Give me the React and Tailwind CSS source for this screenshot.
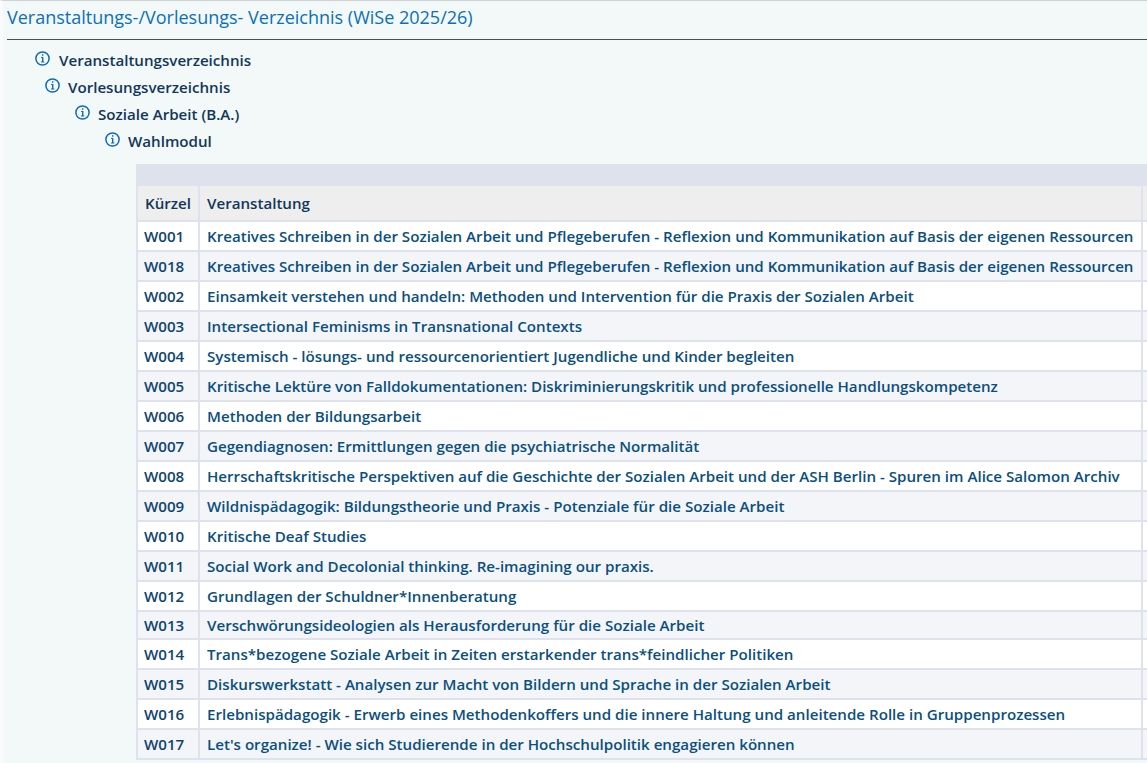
import React from 'react';

const rows = [
    ['W001', 'Kreatives Schreiben in der Sozialen Arbeit und Pflegeberufen - Reflexion und Kommunikation auf Basis der eigenen Ressourcen'],
    ['W018', 'Kreatives Schreiben in der Sozialen Arbeit und Pflegeberufen - Reflexion und Kommunikation auf Basis der eigenen Ressourcen'],
    ['W002', 'Einsamkeit verstehen und handeln: Methoden und Intervention für die Praxis der Sozialen Arbeit'],
    ['W003', 'Intersectional Feminisms in Transnational Contexts'],
    ['W004', 'Systemisch - lösungs- und ressourcenorientiert Jugendliche und Kinder begleiten'],
    ['W005', 'Kritische Lektüre von Falldokumentationen: Diskriminierungskritik und professionelle Handlungskompetenz'],
    ['W006', 'Methoden der Bildungsarbeit'],
    ['W007', 'Gegendiagnosen: Ermittlungen gegen die psychiatrische Normalität'],
    ['W008', 'Herrschaftskritische Perspektiven auf die Geschichte der Sozialen Arbeit und der ASH Berlin - Spuren im Alice Salomon Archiv'],
    ['W009', 'Wildnispädagogik: Bildungstheorie und Praxis - Potenziale für die Soziale Arbeit'],
    ['W010', 'Kritische Deaf Studies'],
    ['W011', 'Social Work and Decolonial thinking. Re-imagining our praxis.'],
    ['W012', 'Grundlagen der Schuldner*Innenberatung'],
    ['W013', 'Verschwörungsideologien als Herausforderung für die Soziale Arbeit'],
    ['W014', 'Trans*bezogene Soziale Arbeit in Zeiten erstarkender trans*feindlicher Politiken'],
    ['W015', 'Diskurswerkstatt - Analysen zur Macht von Bildern und Sprache in der Sozialen Arbeit'],
    ['W016', 'Erlebnispädagogik - Erwerb eines Methodenkoffers und die innere Haltung und anleitende Rolle in Gruppenprozessen'],
    ['W017', "Let's organize! - Wie sich Studierende in der Hochschulpolitik engagieren können"],
];

const tree = [
    { label: 'Veranstaltungsverzeichnis', indent: 'pl-[35px] gap-[9px]' },
    { label: 'Vorlesungsverzeichnis', indent: 'pl-[45px] gap-2' },
    { label: 'Soziale Arbeit (B.A.)', indent: 'pl-[75px] gap-2' },
    { label: 'Wahlmodul', indent: 'pl-[105px] gap-2' },
];

const InfoIcon = () => (
    <svg width="15" height="15" viewBox="0 0 15 15" fill="none" className="shrink-0 -mt-[5px]">
        <circle cx="7.5" cy="7.5" r="6.6" stroke="#0f6cb3" strokeWidth="1.5" />
        <rect x="7" y="3.2" width="1.4" height="1.5" fill="#0f6cb3" />
        <path d="M7.7 6v5" stroke="#0f6cb3" strokeWidth="1.4" />
        <path d="M6 6.4h1.7M6 11h3.4" stroke="#0f6cb3" strokeWidth="1" />
    </svg>
);

const App = () => {
    return (
        <div className="h-[763px] w-[1147px] overflow-hidden border-t border-l-[3px] border-t-[#cfd2d4] border-l-[#f9fbfc] bg-[#f3f8f9] font-['Open_Sans',sans-serif]">
            <h1 className="ml-1 h-[39px] border-b border-[#4b4f54] pt-[3px] text-[18px] leading-[27px] font-normal text-[#0a70b8]">
                Veranstaltungs-/Vorlesungs- Verzeichnis (WiSe 2025/26)
            </h1>
            <div className="-ml-[3px] pt-[7px]">
                {tree.map((item) => (
                    <div key={item.label} className={`flex h-[27px] items-center text-[15.13px] font-semibold text-[#12375a] ${item.indent}`}>
                        <InfoIcon />
                        <span>{item.label}</span>
                    </div>
                ))}
            </div>
            <div className="ml-[133px] mt-[9px] bg-[#dee2ec] pt-[22px] pl-[2px]">
                <table className="w-[1020px] table-fixed border-separate border-spacing-0 text-[15.13px] font-semibold">
                    <thead>
                        <tr className="h-[36px] bg-[#eeeeee] text-left text-[#12375a]">
                            <th className="w-[62px] border-r-2 border-b-2 border-[#dee2ec] px-[7px] font-semibold">Kürzel</th>
                            <th className="w-[943px] border-r-2 border-b-2 border-[#dee2ec] px-[7px] font-semibold">Veranstaltung</th>
                            <th className="border-b-2 border-[#dee2ec]"></th>
                        </tr>
                    </thead>
                    <tbody>
                        {rows.map(([code, title], i) => (
                            <tr key={code} className={`${code === 'W013' ? 'h-[28px]' : 'h-[30px]'} ${i % 2 === 0 ? 'bg-white' : 'bg-[#f3f5f8]'}`}>
                                <td className="border-r-2 border-b-2 border-[#dee2ec] px-[6px] text-[#0f4470]">{code}</td>
                                <td className="border-r-2 border-b-2 border-[#dee2ec] px-[7px] whitespace-nowrap text-[#0a4f80]">{title}</td>
                                <td className="border-b-2 border-[#dee2ec]"></td>
                            </tr>
                        ))}
                    </tbody>
                </table>
            </div>
        </div>
    );
};

export default App;
